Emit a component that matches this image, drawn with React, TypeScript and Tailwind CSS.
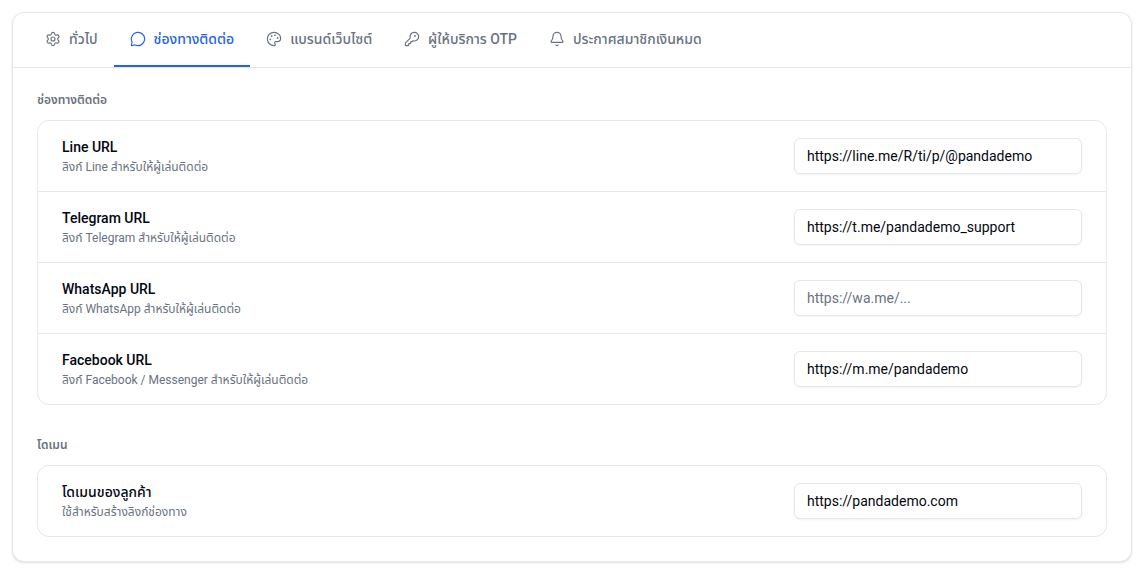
import { useState } from "react";
import { Bell, KeyRound, MessageCircle, Palette, Settings } from "lucide-react";

const tabs = [
  { id: "general", label: "ทั่วไป", icon: Settings },
  { id: "contact", label: "ช่องทางติดต่อ", icon: MessageCircle },
  { id: "branding", label: "แบรนด์เว็บไซต์", icon: Palette },
  { id: "otp", label: "ผู้ให้บริการ OTP", icon: KeyRound },
  { id: "notice", label: "ประกาศสมาชิกเงินหมด", icon: Bell },
];

const sections = [
  {
    title: "ช่องทางติดต่อ",
    fields: [
      { id: "line", label: "Line URL", hint: "ลิงก์ Line สำหรับให้ผู้เล่นติดต่อ", value: "https://line.me/R/ti/p/@pandademo", placeholder: "" },
      { id: "telegram", label: "Telegram URL", hint: "ลิงก์ Telegram สำหรับให้ผู้เล่นติดต่อ", value: "https://t.me/pandademo_support", placeholder: "" },
      { id: "whatsapp", label: "WhatsApp URL", hint: "ลิงก์ WhatsApp สำหรับให้ผู้เล่นติดต่อ", value: "", placeholder: "https://wa.me/..." },
      { id: "facebook", label: "Facebook URL", hint: "ลิงก์ Facebook / Messenger สำหรับให้ผู้เล่นติดต่อ", value: "https://m.me/pandademo", placeholder: "" },
    ],
  },
  {
    title: "โดเมน",
    fields: [
      { id: "domain", label: "โดเมนของลูกค้า", hint: "ใช้สำหรับสร้างลิงก์ช่องทาง", value: "https://pandademo.com", placeholder: "" },
    ],
  },
];

type Field = (typeof sections)[number]["fields"][number];

function FieldRow({ field }: { field: Field }) {
  const [value, setValue] = useState(field.value);

  return (
    <div className="flex items-center justify-between gap-6 px-6 py-4">
      <div className="flex min-w-0 flex-col gap-0.5">
        <label htmlFor={field.id} className="text-sm font-medium text-gray-950">{field.label}</label>
        <p id={`${field.id}-hint`} className="text-xs text-gray-500">{field.hint}</p>
      </div>
      <input
        id={field.id}
        type="text"
        value={value}
        onChange={(e) => setValue(e.target.value)}
        placeholder={field.placeholder}
        aria-describedby={`${field.id}-hint`}
        className="h-9 w-72 shrink-0 rounded-md border border-gray-200 bg-white px-3 text-sm text-gray-950 shadow-xs placeholder:text-gray-500"
      />
    </div>
  );
}

export default function App() {
  const [active, setActive] = useState("contact");

  return (
    <main className="p-3 font-[Roboto,'Noto_Sans_Thai','Noto_Sans',sans-serif]">
      <div className="rounded-xl border border-gray-200 bg-white shadow-sm">
        <div role="tablist" className="flex border-b border-gray-200 px-4">
          {tabs.map(({ id, label, icon: Icon }) => (
            <button
              key={id}
              role="tab"
              aria-selected={active === id}
              onClick={() => setActive(id)}
              className={`flex items-center gap-2 whitespace-nowrap border-b-2 px-4 py-4 text-sm font-medium ${active === id ? "border-[#2563eb] text-[#2563eb]" : "border-transparent text-gray-500 hover:text-gray-950"}`}
            >
              <Icon size={16} strokeWidth={1.75} />
              {label}
            </button>
          ))}
        </div>

        <div className="flex flex-col gap-8 p-6">
          {sections.map((section) => (
            <section key={section.title}>
              <h2 className="mb-3 text-xs font-semibold text-gray-500">{section.title}</h2>
              <div className="divide-y divide-gray-200 rounded-xl border border-gray-200">
                {section.fields.map((field) => <FieldRow key={field.id} field={field} />)}
              </div>
            </section>
          ))}
        </div>
      </div>
    </main>
  );
}
